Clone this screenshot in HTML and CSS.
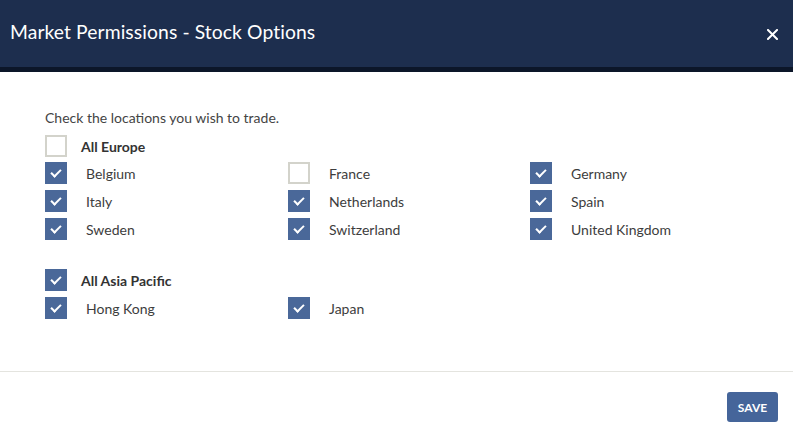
FILE: index.html
```html
<!DOCTYPE html>
<html lang="en">
<head>
<meta charset="utf-8">
<title>Market Permissions - Stock Options</title>
<link rel="stylesheet" href="styles.css">
</head>
<body>
<div class="modal">
  <header class="modal-header">
    <h1 class="modal-title">Market Permissions - Stock Options</h1>
    <button class="close" aria-label="Close">
      <svg width="11" height="11" viewBox="0 0 11 11"><path d="M1 1 L10 10 M10 1 L1 10" stroke="#fff" stroke-width="2" stroke-linecap="square"/></svg>
    </button>
  </header>
  <main class="modal-body">
    <p class="intro">Check the locations you wish to trade.</p>

    <section class="group">
      <label class="group-head"><span class="box"></span><span class="group-label">All Europe</span></label>
      <div class="grid">
        <label class="item"><span class="box checked"></span><span class="lbl">Belgium</span></label>
        <label class="item"><span class="box"></span><span class="lbl">France</span></label>
        <label class="item"><span class="box checked"></span><span class="lbl">Germany</span></label>
        <label class="item"><span class="box checked"></span><span class="lbl">Italy</span></label>
        <label class="item"><span class="box checked"></span><span class="lbl">Netherlands</span></label>
        <label class="item"><span class="box checked"></span><span class="lbl">Spain</span></label>
        <label class="item"><span class="box checked"></span><span class="lbl">Sweden</span></label>
        <label class="item"><span class="box checked"></span><span class="lbl">Switzerland</span></label>
        <label class="item"><span class="box checked"></span><span class="lbl">United Kingdom</span></label>
      </div>
    </section>

    <section class="group group-asia">
      <label class="group-head"><span class="box checked"></span><span class="group-label">All Asia Pacific</span></label>
      <div class="grid">
        <label class="item"><span class="box checked"></span><span class="lbl">Hong Kong</span></label>
        <label class="item"><span class="box checked"></span><span class="lbl">Japan</span></label>
      </div>
    </section>
  </main>
  <footer class="modal-footer">
    <button class="save">SAVE</button>
  </footer>
</div>
</body>
</html>
```

FILE: styles.css
```css
* { box-sizing: border-box; }
html, body { margin: 0; padding: 0; background: #fff; }
body {
  font-family: Lato, "Open Sans", "Liberation Sans", sans-serif;
  color: #3d3d3d;
  width: 793px;
  height: 436px;
  overflow: hidden;
}
.modal { width: 793px; height: 436px; display: flex; flex-direction: column; }
.modal-header {
  height: 72px;
  background: #1d2e4e;
  border-bottom: 5px solid #0c1629;
  display: flex;
  align-items: center;
  justify-content: space-between;
  padding: 0 15px 4px 10px;
}
.modal-title {
  margin: 0;
  font-size: 19.3px;
  font-weight: 400;
  color: #fff;
  letter-spacing: 0.1px;
}
.close {
  background: none;
  border: 0;
  padding: 0;
  margin-top: 6px;
  width: 11px;
  height: 11px;
  display: flex;
}
.modal-body {
  height: 300px;
  padding: 38px 0 0 45px;
  border-bottom: 1px solid #e4e4df;
}
.intro {
  margin: 0 0 9px;
  font-size: 14px;
  line-height: 16px;
  color: #444;
}
.group-head, .item {
  display: flex;
  align-items: center;
  height: 22px;
}
.group-head { margin-bottom: 5px; }
.group-label {
  margin-left: 14px;
  font-size: 14px;
  font-weight: 700;
  color: #333;
}
.grid {
  display: grid;
  grid-template-columns: 243px 242px 200px;
  row-gap: 6px;
}
.lbl {
  margin-left: 19px;
  font-size: 14px;
  color: #3d3d3d;
}
.box {
  width: 22px;
  height: 22px;
  flex: none;
  border: 2px solid #d3d3cb;
  background: #fff;
  position: relative;
}
.box.checked {
  border: 0;
  background: #4a6899;
}
.box.checked::after {
  content: "";
  position: absolute;
  width: 8px;
  height: 4px;
  border-left: 2px solid #fff;
  border-bottom: 2px solid #fff;
  transform: rotate(-45deg);
  transform-origin: 50% 50%;
  top: 7px;
  left: 6px;
}
.group-asia { margin-top: 29px; }
.group-asia .group-head { margin-bottom: 6px; }
.modal-footer {
  flex: 1;
  display: flex;
  justify-content: flex-end;
  align-items: flex-start;
  padding: 20px 15px 0 0;
}
.save {
  width: 51px;
  height: 30px;
  border: 0;
  border-radius: 3px;
  background: #45659a;
  color: #fff;
  font-family: Lato, "Open Sans", sans-serif;
  font-weight: 700;
  font-size: 12px;
  padding: 0;
}
```
